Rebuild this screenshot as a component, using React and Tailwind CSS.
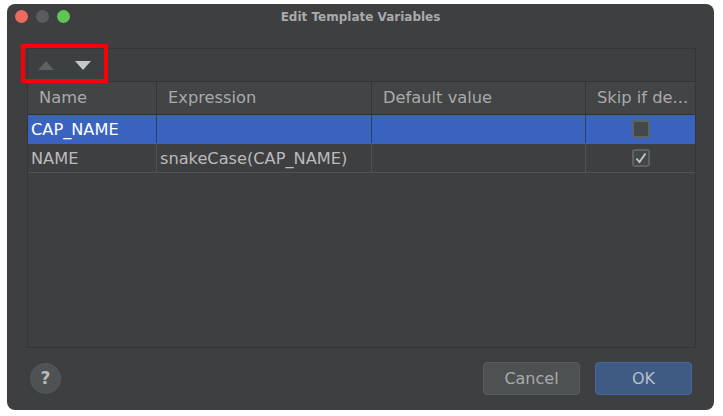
import React from 'react';

const columns = [
    { name: 'Name', width: 'w-[129px]' },
    { name: 'Expression', width: 'w-[215px]' },
    { name: 'Default value', width: 'w-[214px]' },
    { name: 'Skip if de...', width: 'flex-1' },
];

const Checkbox = ({ checked }) => (
    <div className="w-[18px] h-[18px] rounded-[3px] bg-[#43494a] border-2 border-[#5f6263] flex items-center justify-center">
        {checked && (
            <svg width="12" height="12" viewBox="0 0 12 12" fill="none">
                <path d="M1.5 6.5 L4.5 10 L10.5 1.5" stroke="#c8c9c9" strokeWidth="1.8" />
            </svg>
        )}
    </div>
);

const Row = ({ cells, selected, checked }) => (
    <div className={`flex h-[29px] text-[16.2px] leading-[29px] border-b ${selected ? 'bg-[#3a62bf] text-white border-[#3a62bf]' : 'text-[#bbbbbb] border-[#515151]'}`}>
        <div className={`w-[129px] pl-[3px] border-r ${selected ? 'border-[#2f3f63]' : 'border-[#515151]'}`}>{cells[0]}</div>
        <div className={`w-[215px] pl-[3px] border-r ${selected ? 'border-[#2f3f63]' : 'border-[#515151]'}`}>{cells[1]}</div>
        <div className={`w-[214px] pl-[3px] border-r ${selected ? 'border-[#2f3f63]' : 'border-[#515151]'}`}>{cells[2]}</div>
        <div className="flex-1 flex items-center justify-center pl-[1px]">
            <Checkbox checked={checked} />
        </div>
    </div>
);

export default function App() {
    return (
        <div className="w-[723px] h-[416px] bg-white overflow-hidden pl-[7px] pt-[4px] font-['DejaVu_Sans',sans-serif]">
            <div className="relative w-[707px] h-[406px] bg-[#3e3f41] rounded-[8px] flex flex-col">
                {/* Title bar */}
                <div className="relative h-[26px] flex items-center justify-center shrink-0">
                    <div className="absolute left-[8px] top-[6px] flex gap-[8px]">
                        <div className="w-[13px] h-[13px] rounded-full bg-[#ec6a5e]"></div>
                        <div className="w-[13px] h-[13px] rounded-full bg-[#5b5c5e]"></div>
                        <div className="w-[13px] h-[13px] rounded-full bg-[#61c554]"></div>
                    </div>
                    <span className="text-[12px] font-bold text-[#a9aaab]">Edit Template Variables</span>
                </div>

                {/* Table panel */}
                <div className="ml-[20px] mt-[18px] w-[669px] h-[300px] border border-[#343536] flex flex-col">
                    <div className="h-[33px] border-b border-[#343536] flex items-center shrink-0 pl-[10px] gap-[21px]">
                        <svg width="16" height="9" viewBox="0 0 16 9">
                            <polygon points="8,0 16,9 0,9" fill="#5f6062" />
                        </svg>
                        <svg width="16" height="9" viewBox="0 0 16 9">
                            <polygon points="0,0 16,0 8,9" fill="#c6c7c7" />
                        </svg>
                    </div>
                    <div className="h-[33px] flex bg-[#434445] border-b border-[#303132] text-[16.3px] text-[#a9aaaa] leading-[32px] shrink-0">
                        {columns.map((col, i) => (
                            <div key={col.name} className={`${col.width} pl-[11px] whitespace-nowrap ${i < 3 ? 'border-r border-[#353637]' : ''}`}>{col.name}</div>
                        ))}
                    </div>
                    <Row cells={['CAP_NAME', '', '']} selected />
                    <Row cells={['NAME', 'snakeCase(CAP_NAME)', '']} checked />
                </div>

                {/* Footer */}
                <div className="flex items-center ml-[23px] mt-[14px] mr-[22px]">
                    <div className="w-[31px] h-[31px] rounded-full bg-[#4f5254] border border-[#56595b] flex items-center justify-center text-[#b9baba] text-[17px] font-bold">?</div>
                    <button className="ml-auto w-[97px] h-[33px] rounded-[4px] bg-[#4e5152] border border-[#595b5c] text-[#a9aaaa] text-[16px]">Cancel</button>
                    <button className="ml-[15px] w-[97px] h-[33px] rounded-[4px] bg-[#3f5b83] border border-[#47689a] text-[#b5bfcc] text-[16px]">OK</button>
                </div>

                {/* Red annotation */}
                <div className="absolute left-[14px] top-[40px] w-[87px] h-[39px] border-[4px] border-[#fb0007]"></div>
            </div>
        </div>
    );
}
